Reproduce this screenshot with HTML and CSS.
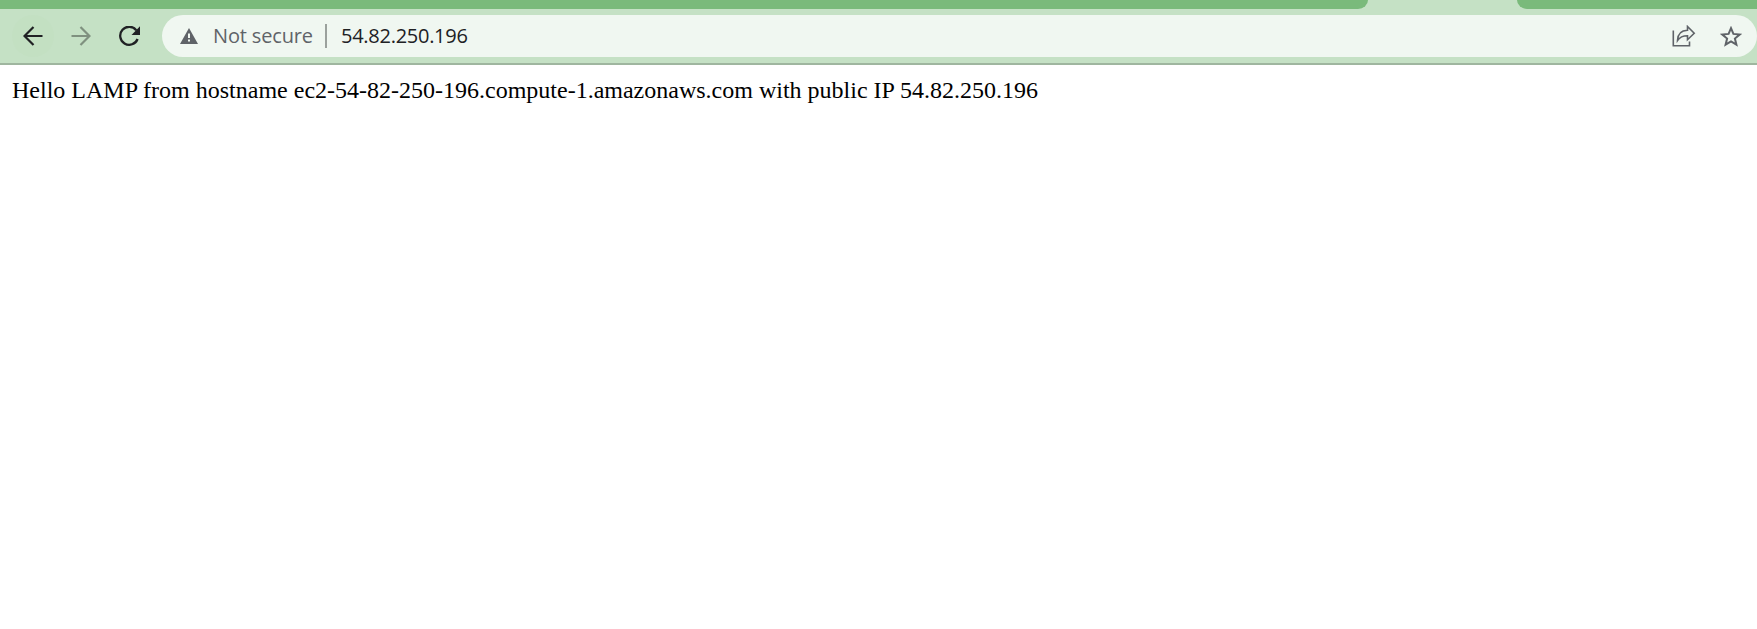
FILE: index.html
```html
<!DOCTYPE html>
<html lang="en">
<head>
<meta charset="utf-8">
<title>54.82.250.196</title>
<link rel="stylesheet" href="styles.css">
</head>
<body>
<header class="browser">
  <div class="tabs"><div class="tab tab-left"></div><div class="tab tab-right"></div></div>
  <div class="toolbar">
    <nav class="nav">
      <button class="nav-button back" aria-label="Back"><svg width="20" height="20" viewBox="0 0 20 20" fill="none" stroke="#202124" stroke-width="2.200"><path d="M19.500 10H2M10.500 1 1.500 10l9 9"/></svg></button>
      <button class="nav-button" aria-label="Forward"><svg width="20" height="20" viewBox="0 0 20 20" fill="none" stroke="#7f917f" stroke-width="2.200"><path d="M.5 10H18M9.500 1l9 9-9 9"/></svg></button>
      <button class="nav-button reload" aria-label="Reload"><svg width="22" height="20" viewBox="0 0 22 20"><path d="M18.600 13A9 9 0 1 1 17.300 4.200" fill="none" stroke="#202124" stroke-width="2.300"/><path d="M21 .3V9h-8.500z" fill="#202124"/></svg></button>
    </nav>
    <div class="address">
      <svg class="warning" width="18" height="16" viewBox="0 0 18 16"><path d="M9 0l9 16H0z" fill="#5f6368"/><path d="M8 5.500h2v4.500H8zM8 11.500h2v2H8z" fill="#f0f7f1"/></svg>
      <span class="security">Not secure</span>
      <span class="divider"></span>
      <span class="url">54.82.250.196</span>
      <svg class="share" width="24" height="22" viewBox="0 0 24 22" fill="none" stroke="#5f6368" stroke-width="1.600"><path d="M1.300 5.500v15.200h16.200v-4.200"/><path d="M5.500 15.500C5.700 9.500 9 5.500 15.500 5.300V1.500l6.700 6.700-6.700 6.500v-4C11 10.700 7.800 12 5.500 15.500z"/></svg>
      <svg class="star" width="22" height="21" viewBox="0 0 22 21" fill="none" stroke="#5f6368" stroke-width="2"><path d="M11 2.200l2.400 5.700 6.300.6-4.800 4 1.500 6.200L11 15.400l-5.400 3.300 1.500-6.200-4.800-4 6.300-.6z"/></svg>
    </div>
  </div>
</header>
<main class="page">Hello LAMP from hostname ec2-54-82-250-196.compute-1.amazonaws.com with public IP 54.82.250.196</main>
</body>
</html>
```
FILE: styles.css
```css
body {
  margin: 0;
  background: #fff;
  overflow: hidden;
}
.browser {
  box-sizing: border-box;
  height: 65px;
  background: #c5e1c5;
  border-bottom: 2px solid #9fb69f;
}
.tabs {
  display: flex;
  justify-content: space-between;
  height: 9px;
}
.tab {
  background: #7aba7b;
}
.tab-left {
  width: 1368px;
  border-bottom-right-radius: 10px 9px;
}
.tab-right {
  width: 240px;
  border-bottom-left-radius: 10px 9px;
}
.toolbar {
  display: flex;
  padding-top: 6px;
}
.nav {
  display: flex;
  gap: 6px;
  width: 150px;
  padding-left: 12px;
}
.nav-button {
  display: flex;
  align-items: center;
  justify-content: center;
  width: 42px;
  height: 42px;
  padding: 0;
  border: 0;
  border-radius: 50%;
  background: none;
}
.back {
  background: #c3e0c2;
}
.reload {
  margin-left: 1px;
}
.address {
  display: flex;
  flex: 1;
  align-items: center;
  box-sizing: border-box;
  height: 42px;
  padding: 0 15px 0 18px;
  border-radius: 21px;
  background: #f0f7f1;
  font: 20px/42px "Open Sans", sans-serif;
  white-space: nowrap;
}
.security {
  width: 112px;
  margin-left: 15px;
  color: #5f6368;
  letter-spacing: -0.15px;
}
.divider {
  width: 2px;
  height: 24px;
  margin-right: 14px;
  background: #9ba19d;
}
.url {
  color: #202124;
  letter-spacing: -0.27px;
}
.share {
  margin-left: auto;
  margin-right: 24px;
}
.page {
  padding: 12px;
  font: 24px/27px "Liberation Serif", "Times New Roman", serif;
  color: #000;
}
```
